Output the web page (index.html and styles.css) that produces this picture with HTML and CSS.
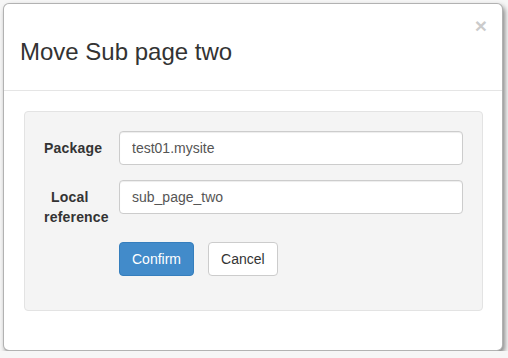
FILE: index.html
```html
<!DOCTYPE html>
<html lang="en">
<head>
  <meta charset="UTF-8" />
  <title>Move Sub page two</title>
  <link rel="stylesheet" href="styles.css">
</head>
<body>
  <div class="modal">
    <div class="modal-header">
      <h4 class="modal-title">Move Sub page two</h4>
      <button class="close" type="button">&times;</button>
    </div>

    <div class="modal-body">
      <form class="well">
        <label class="field-label" for="package">Package</label>
        <input class="field" type="text" id="package" value="test01.mysite">

        <label class="field-label tall" for="localref"><span class="indent">Local</span><br>reference</label>
        <input class="field" type="text" id="localref" value="sub_page_two">

        <div class="actions">
          <button class="btn btn-primary" type="button">Confirm</button>
          <button class="btn btn-default" type="button">Cancel</button>
        </div>
      </form>
    </div>
  </div>
</body>
</html>
```

FILE: styles.css
```css
* {
  margin: 0;
  padding: 0;
  box-sizing: border-box;
  font-family: 'Liberation Sans', Arial, sans-serif;
}

body {
  background: #f6f6f6;
  color: #333;
  padding: 3px 0 0 3px;
}

.modal {
  width: 500px;
  background: #fff;
  border: 1px solid rgba(0, 0, 0, 0.3);
  border-radius: 6px;
  box-shadow: 2px 3px 5px rgba(0, 0, 0, 0.45);
}

.modal-header {
  display: flex;
  justify-content: space-between;
  align-items: flex-start;
  height: 87px;
  padding: 15px 15px 0 16px;
  border-bottom: 1px solid #e5e5e5;
}

.modal-title {
  font-size: 24px;
  font-weight: normal;
  line-height: 1.1;
  margin-top: 20px;
  color: #333;
}

.close {
  background: none;
  border: none;
  font-size: 21px;
  font-weight: bold;
  line-height: 1;
  color: #000;
  opacity: 0.2;
  margin-top: -4px;
  cursor: pointer;
}

.modal-body {
  padding: 20px 19px 39px 20px;
}

.well {
  display: grid;
  grid-template-columns: 75px 1fr;
  row-gap: 15px;
  background: #f4f4f4;
  border: 1px solid #e3e3e3;
  border-radius: 4px;
  padding: 19px 19px 34px 19px;
}

.field-label {
  font-size: 14px;
  font-weight: bold;
  line-height: 20px;
  letter-spacing: 0.2px;
  align-self: center;
}

.field-label.tall {
  align-self: start;
  padding-top: 7px;
}

.indent {
  padding-left: 7px;
}

.field {
  height: 34px;
  padding: 6px 12px;
  font-size: 14px;
  color: #555;
  background: #fff;
  border: 1px solid #ccc;
  border-radius: 4px;
  box-shadow: inset 0 1px 1px rgba(0, 0, 0, 0.075);
}

.actions {
  grid-column: 2;
  display: flex;
  gap: 14px;
}

.btn {
  height: 34px;
  padding: 6px 12px;
  font-size: 14px;
  line-height: 20px;
  border: 1px solid transparent;
  border-radius: 4px;
  cursor: pointer;
}

.btn-primary {
  background: #428bca;
  border-color: #357ebd;
  color: #fff;
}

.btn-default {
  background: #fff;
  border-color: #ccc;
  color: #333;
}
```
